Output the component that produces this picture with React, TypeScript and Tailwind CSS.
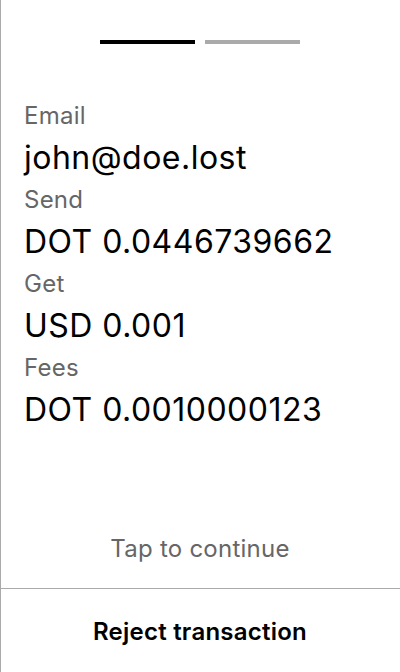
import React from "react";

const rows = [
  ["Email", "john@doe.lost"],
  ["Send", "DOT 0.0446739662"],
  ["Get", "USD 0.001"],
  ["Fees", "DOT 0.0010000123"],
];

export default function App() {
  return (
    <div
      className="w-[400px] h-[672px] bg-white border-l border-[#aaaaaa] flex flex-col"
      style={{ fontFamily: "Inter, 'Noto Sans', sans-serif" }}
    >
      <div className="flex justify-center gap-[10px] pt-[40px] pr-[1px]">
        <div className="w-[95px] h-[4px] bg-black" />
        <div className="w-[95px] h-[4px] bg-[#aaaaaa]" />
      </div>
      <div className="flex flex-col pl-[23px] pt-[56px]">
        {rows.map(([l, v]) => (
          <div key={l} className="flex flex-col">
            <div className="text-[24px] leading-[32px] tracking-[0.01em] text-[#666666]">{l}</div>
            <div className="text-[32px] leading-[40px] tracking-[0.015em] text-black mt-[6px] mb-[6px]">{v}</div>
          </div>
        ))}
      </div>
      <div className="flex-1" />
      <div className="text-center text-[24px] leading-[28px] tracking-[0.01em] text-[#666666] pb-[25px] pr-[1px]">
        Tap to continue
      </div>
      <div className="border-t border-[#aaaaaa] h-[84px] flex items-center justify-center pr-[1px] pt-[2px]">
        <span className="text-[24px] font-semibold tracking-[0.01em] text-black">Reject transaction</span>
      </div>
    </div>
  );
}
